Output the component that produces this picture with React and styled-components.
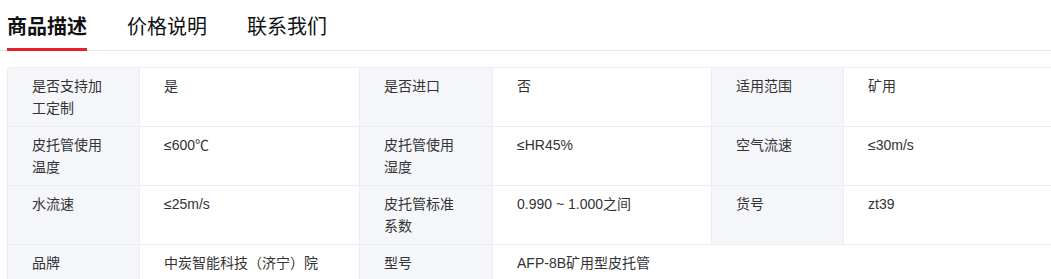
import React from 'react';
import styled, { createGlobalStyle } from 'styled-components';

const GlobalStyle = createGlobalStyle`
	html, body {
		margin: 0;
		padding: 0;
		overflow: hidden;
		background: #fff;
		font-family: "Liberation Sans", "Noto Sans CJK SC", sans-serif;
		color: #333;
	}
`;

/**
 * Tabs bar
 */
const TabBar = styled.div`
	display: flex;
	gap: 40px;
	height: 51px;
	padding-left: 7px;
	border-bottom: 1px solid #e8e8e8;
	box-sizing: border-box;
`;

const Tab = styled.div`
	position: relative;
	display: flex;
	align-items: center;
	height: 51px;
	padding-bottom: 1px;
	box-sizing: border-box;
	font-family: "Noto Sans CJK SC", sans-serif;
	font-size: 20px;
	font-weight: ${props => props.$active ? 700 : 400};
	color: #111;

	&::after {
		content: '';
		display: ${props => props.$active ? 'block' : 'none'};
		position: absolute;
		left: 0;
		right: 0;
		bottom: 0;
		height: 3px;
		background: #e4202a;
	}
`;

/**
 * Spec table
 */
const Wrap = styled.div`
	padding: 16px 0 0 7px;
`;

const Table = styled.table`
	width: 1056px;
	border-collapse: separate;
	border-spacing: 0;
	table-layout: fixed;
	border-top: 1px solid #ebedf0;
	border-left: 1px solid #ebedf0;
	border-top-left-radius: 4px;
	overflow: hidden;
	font-size: 14px;
	line-height: 22px;
`;

const Col = styled.col`
	width: ${props => props.$w ? `${props.$w}px` : 'auto'};
`;

const Cell = styled.td`
	padding: 7px 26px 7px 24px;
	vertical-align: top;
	border-right: 1px solid #ebedf0;
	border-bottom: 1px solid #ebedf0;
	background: ${props => props.$label ? '#f5f6fa' : '#fff'};
	color: #333;
	word-break: break-all;
	height: 44px;
`;

const widths = [132, 220, 133, 219, 132, null];

const rows = [
	[['是否支持加工定制', '是'], ['是否进口', '否'], ['适用范围', '矿用']],
	[['皮托管使用温度', '≤600℃'], ['皮托管使用湿度', '≤HR45%'], ['空气流速', '≤30m/s']],
	[['水流速', '≤25m/s'], ['皮托管标准系数', '0.990 ~ 1.000之间'], ['货号', 'zt39']],
	[['品牌', '中炭智能科技（济宁）院'], ['型号', 'AFP-8B矿用型皮托管']],
];

export default function App() {
	return (
		<>
			<GlobalStyle />
			<TabBar>
				<Tab $active>商品描述</Tab>
				<Tab>价格说明</Tab>
				<Tab>联系我们</Tab>
			</TabBar>
			<Wrap>
				<Table>
					<colgroup>
						{widths.map((w, i) => <Col key={i} $w={w} />)}
					</colgroup>
					<tbody>
						{rows.map((row, i) => (
							<tr key={i}>
								{row.map(([label, value], j) => (
									<React.Fragment key={j}>
										<Cell $label>{label}</Cell>
										<Cell colSpan={j === row.length - 1 && row.length < 3 ? 3 : 1}>{value}</Cell>
									</React.Fragment>
								))}
							</tr>
						))}
					</tbody>
				</Table>
			</Wrap>
		</>
	);
}
